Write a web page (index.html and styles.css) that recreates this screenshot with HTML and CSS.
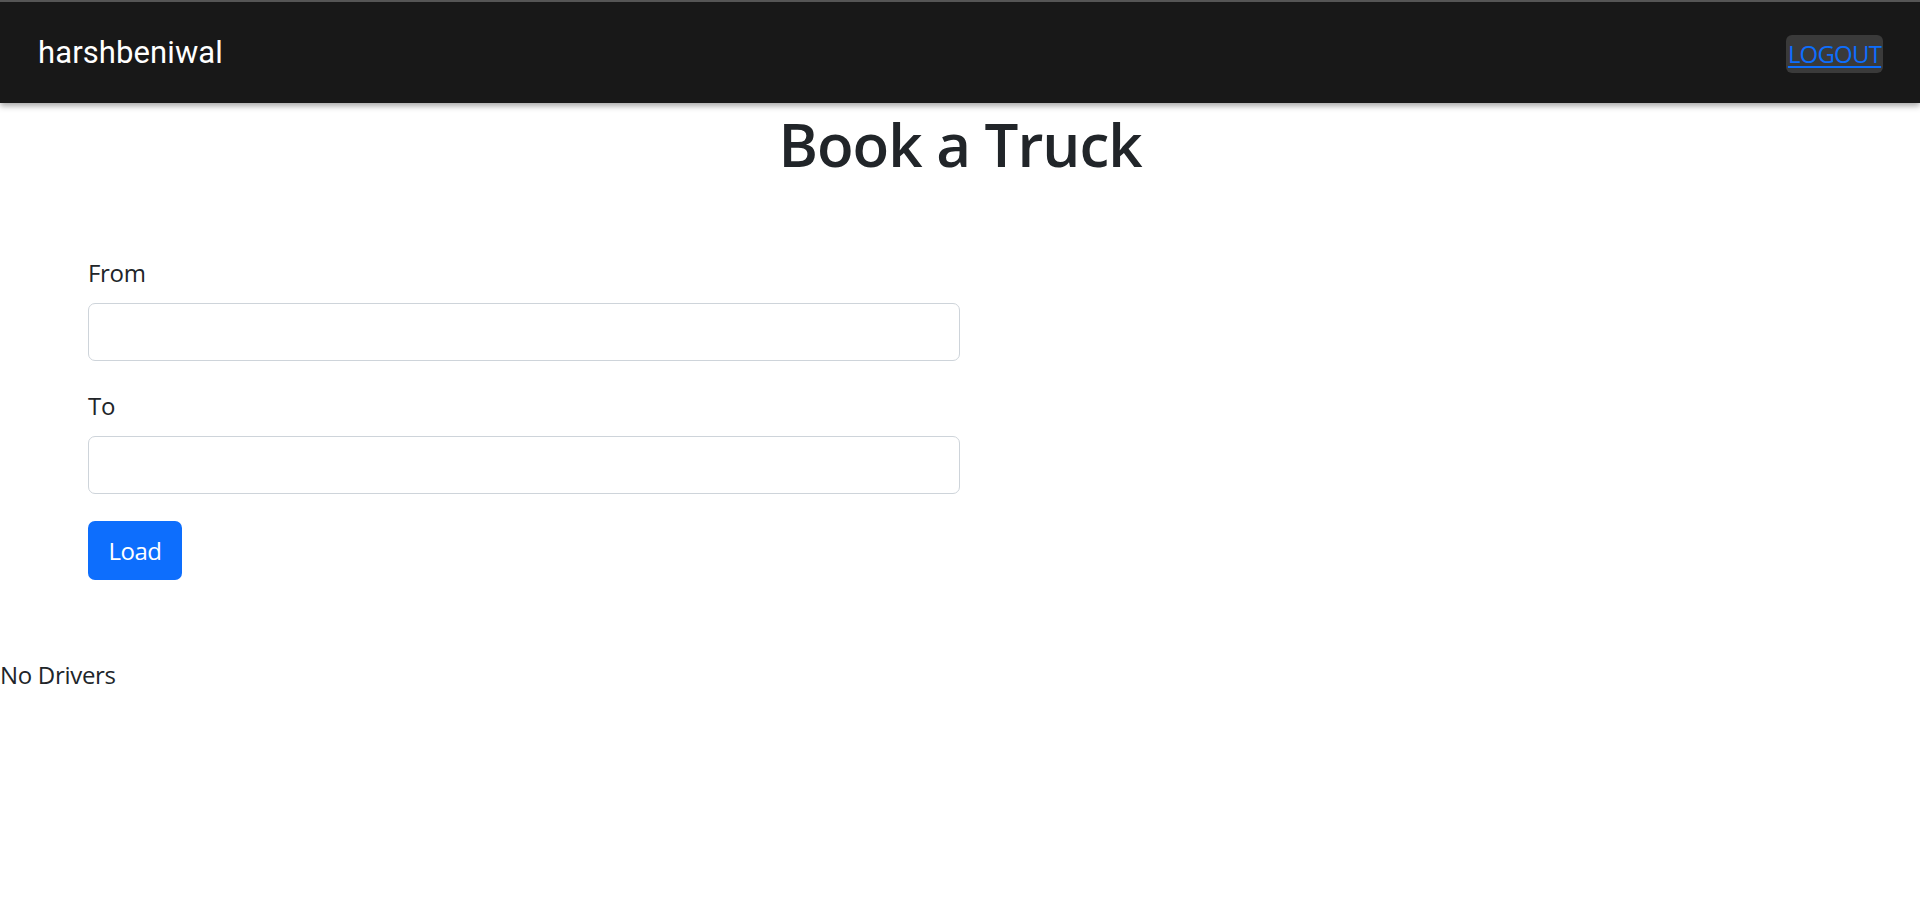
FILE: index.html
```html
<!DOCTYPE html>
<html lang="en">
<head>
<meta charset="utf-8">
<title>Book a Truck</title>
<link rel="stylesheet" href="styles.css">
</head>
<body>
<nav class="navbar">
  <span class="brand">harshbeniwal</span>
  <button class="logout" type="button"><a href="#" class="logout-link">LOGOUT</a></button>
</nav>
<main class="page">
  <h1 class="title">Book a Truck</h1>
  <form class="booking">
    <div class="field">
      <label class="field-label" for="from">From</label>
      <input class="field-input" id="from" type="text">
    </div>
    <div class="field">
      <label class="field-label" for="to">To</label>
      <input class="field-input" id="to" type="text">
    </div>
    <button class="btn-load" type="button">Load</button>
  </form>
  <div class="drivers">No Drivers</div>
</main>
</body>
</html>
```

FILE: styles.css
```css
* { box-sizing: border-box; }

html, body {
  margin: 0;
  padding: 0;
  background: #ffffff;
}

body {
  font-family: "Open Sans", "Noto Sans", sans-serif;
  font-size: 24px;
  line-height: 36px;
  color: #212529;
  border-top: 2px solid #555555;
}

.navbar {
  height: 101px;
  background: #181818;
  display: flex;
  align-items: center;
  justify-content: space-between;
  padding: 0 37px 0 38px;
  box-shadow: 0 3px 6px rgba(0, 0, 0, 0.35);
  position: relative;
  z-index: 1;
}

.brand {
  font-family: Roboto, "Liberation Sans", sans-serif;
  font-size: 31px;
  line-height: 36px;
  color: #ffffff;
  letter-spacing: 0.1px;
}

.logout {
  background: #3a3a3a;
  border: none;
  border-radius: 6px;
  height: 38px;
  padding: 0;
  width: 97px;
  display: flex;
  align-items: center;
  justify-content: center;
  margin-top: 2px;
}

.logout-link {
  font-family: "Open Sans", "Noto Sans", sans-serif;
  font-size: 24px;
  line-height: 36px;
  color: #0d6efd;
  text-decoration: underline;
  text-underline-offset: 3px;
  letter-spacing: -0.8px;
}

.page {
  display: block;
}

.title {
  margin: 5px 0 0;
  text-align: center;
  font-size: 60px;
  line-height: 72px;
  font-weight: 600;
  letter-spacing: -1px;
  color: #212529;
}

.booking {
  width: 960px;
  padding-left: 88px;
  margin-top: 75px;
}

.field {
  display: flex;
  flex-direction: column;
  margin-bottom: 27px;
}

.field-label {
  margin-bottom: 12px;
  letter-spacing: -0.3px;
}

.field-input {
  height: 58px;
  border: 1.5px solid #ced4da;
  border-radius: 7px;
  background: #ffffff;
  font-size: 24px;
  font-family: inherit;
  padding: 0 18px;
}

.btn-load {
  height: 59px;
  width: 94px;
  padding: 0;
  background: #0d6efd;
  color: #ffffff;
  border: none;
  border-radius: 7px;
  font-family: "Open Sans", "Noto Sans", sans-serif;
  font-size: 24px;
  letter-spacing: -0.5px;
}

.drivers {
  margin-top: 77px;
  letter-spacing: -0.3px;
}
```
